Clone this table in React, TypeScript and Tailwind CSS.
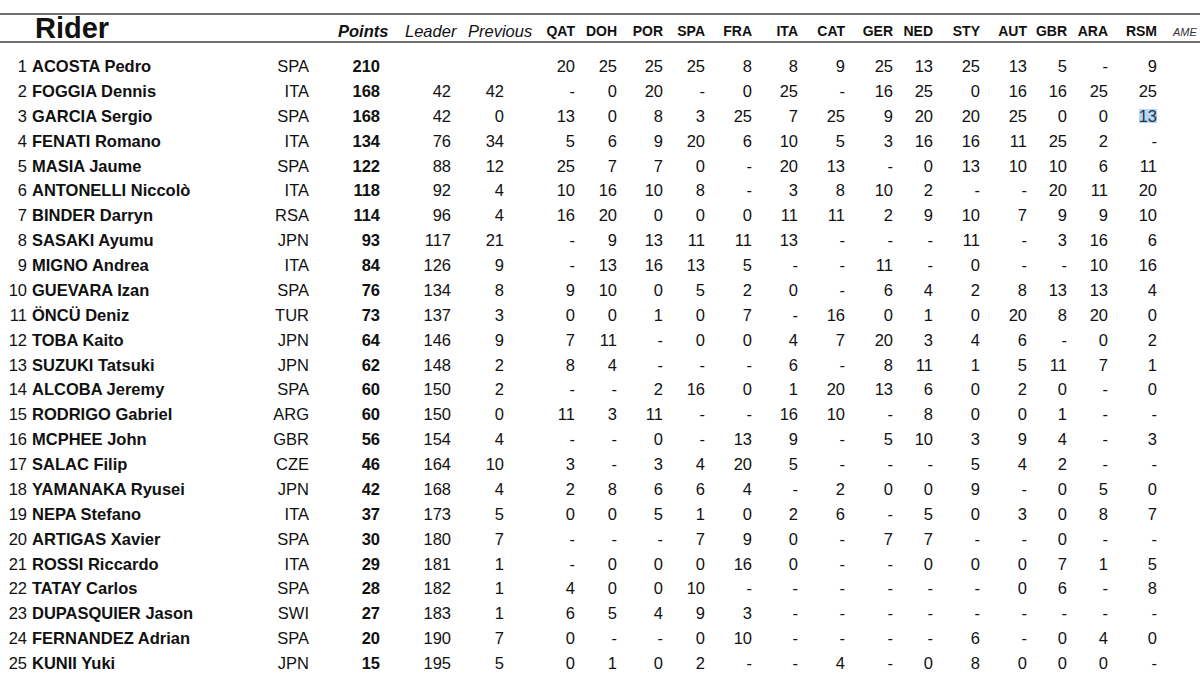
import React from 'react';

const races = ['QAT', 'DOH', 'POR', 'SPA', 'FRA', 'ITA', 'CAT', 'GER', 'NED', 'STY', 'AUT', 'GBR', 'ARA', 'RSM'];

// widths picked so each race column's right edge sits under its header
const raceW = [
  'w-[71px]', 'w-[42px]', 'w-[46px]', 'w-[42px]', 'w-[47px]', 'w-[46px]', 'w-[47px]',
  'w-[48px]', 'w-[40px]', 'w-[47px]', 'w-[47px]', 'w-[40px]', 'w-[41px]', 'w-[49px]',
];

type Row = [string, string, string, number, string, string, string];

// name, first, nation, points, leader, previous, race results
const rows: Row[] = [
  ['ACOSTA', 'Pedro', 'SPA', 210, '', '', '20 25 25 25 8 8 9 25 13 25 13 5 - 9'],
  ['FOGGIA', 'Dennis', 'ITA', 168, '42', '42', '- 0 20 - 0 25 - 16 25 0 16 16 25 25'],
  ['GARCIA', 'Sergio', 'SPA', 168, '42', '0', '13 0 8 3 25 7 25 9 20 20 25 0 0 13'],
  ['FENATI', 'Romano', 'ITA', 134, '76', '34', '5 6 9 20 6 10 5 3 16 16 11 25 2 -'],
  ['MASIA', 'Jaume', 'SPA', 122, '88', '12', '25 7 7 0 - 20 13 - 0 13 10 10 6 11'],
  ['ANTONELLI', 'Niccolò', 'ITA', 118, '92', '4', '10 16 10 8 - 3 8 10 2 - - 20 11 20'],
  ['BINDER', 'Darryn', 'RSA', 114, '96', '4', '16 20 0 0 0 11 11 2 9 10 7 9 9 10'],
  ['SASAKI', 'Ayumu', 'JPN', 93, '117', '21', '- 9 13 11 11 13 - - - 11 - 3 16 6'],
  ['MIGNO', 'Andrea', 'ITA', 84, '126', '9', '- 13 16 13 5 - - 11 - 0 - - 10 16'],
  ['GUEVARA', 'Izan', 'SPA', 76, '134', '8', '9 10 0 5 2 0 - 6 4 2 8 13 13 4'],
  ['ÖNCÜ', 'Deniz', 'TUR', 73, '137', '3', '0 0 1 0 7 - 16 0 1 0 20 8 20 0'],
  ['TOBA', 'Kaito', 'JPN', 64, '146', '9', '7 11 - 0 0 4 7 20 3 4 6 - 0 2'],
  ['SUZUKI', 'Tatsuki', 'JPN', 62, '148', '2', '8 4 - - - 6 - 8 11 1 5 11 7 1'],
  ['ALCOBA', 'Jeremy', 'SPA', 60, '150', '2', '- - 2 16 0 1 20 13 6 0 2 0 - 0'],
  ['RODRIGO', 'Gabriel', 'ARG', 60, '150', '0', '11 3 11 - - 16 10 - 8 0 0 1 - -'],
  ['MCPHEE', 'John', 'GBR', 56, '154', '4', '- - 0 - 13 9 - 5 10 3 9 4 - 3'],
  ['SALAC', 'Filip', 'CZE', 46, '164', '10', '3 - 3 4 20 5 - - - 5 4 2 - -'],
  ['YAMANAKA', 'Ryusei', 'JPN', 42, '168', '4', '2 8 6 6 4 - 2 0 0 9 - 0 5 0'],
  ['NEPA', 'Stefano', 'ITA', 37, '173', '5', '0 0 5 1 0 2 6 - 5 0 3 0 8 7'],
  ['ARTIGAS', 'Xavier', 'SPA', 30, '180', '7', '- - - 7 9 0 - 7 7 - - 0 - -'],
  ['ROSSI', 'Riccardo', 'ITA', 29, '181', '1', '- 0 0 0 16 0 - - 0 0 0 7 1 5'],
  ['TATAY', 'Carlos', 'SPA', 28, '182', '1', '4 0 0 10 - - - - - - 0 6 - 8'],
  ['DUPASQUIER', 'Jason', 'SWI', 27, '183', '1', '6 5 4 9 3 - - - - - - - - -'],
  ['FERNANDEZ', 'Adrian', 'SPA', 20, '190', '7', '0 - - 0 10 - - - - 6 - 0 4 0'],
  ['KUNII', 'Yuki', 'JPN', 15, '195', '5', '0 1 0 2 - - 4 - 0 8 0 0 0 -'],
];

const App: React.FC = () => {
  return (
    <div className="w-[1200px] h-[690px] overflow-hidden bg-white text-[#111] font-['Liberation_Sans',Arial,sans-serif]">
      {/* header band */}
      <div className="mt-[13px] h-[30px] border-y-2 border-[#707070] flex items-start whitespace-nowrap">
        <div className="w-[338px] pl-[35px] text-[29px] leading-[26px] font-bold">Rider</div>
        <div className="w-[67px] pt-[8px] text-[16.5px] leading-none italic font-bold">Points</div>
        <div className="w-[63px] pt-[8px] text-[16.5px] leading-none italic">Leader</div>
        <div className="w-[36px] pt-[8px] text-[16.5px] leading-none italic">Previous</div>
        {races.map((r, i) => (
          <div key={r} className={`${raceW[i]} pt-[9px] text-[14px] leading-none font-bold text-right`}>
            {r}
          </div>
        ))}
        <div className="pl-[16px] pt-[12px] text-[11px] leading-none italic text-[#333]">AME</div>
      </div>

      {/* standings */}
      <div className="mt-[11px] text-[16.5px] whitespace-nowrap">
        {rows.map(([last, first, nat, pts, leader, prev, res], idx) => (
          <div key={last} className="flex h-[24.875px] leading-[24.875px]">
            <div className="w-[27px] text-right">{idx + 1}</div>
            <div className="w-[225px] pl-[5px] font-bold">
              {last} {first}
            </div>
            <div className="w-[57px] text-right">{nat}</div>
            <div className="w-[71px] text-right font-bold">{pts}</div>
            <div className="w-[71px] text-right">{leader}</div>
            <div className="w-[53px] text-right">{prev}</div>
            {res.split(' ').map((v, i) => (
              <div key={i} className={`${raceW[i]} text-right`}>
                {idx === 2 && i === 13 ? (
                  <span className="inline-block bg-[#b8d5f2] text-[#1d3553] leading-[14px]">{v}</span>
                ) : (
                  v
                )}
              </div>
            ))}
          </div>
        ))}
      </div>
    </div>
  );
};

export default App;
